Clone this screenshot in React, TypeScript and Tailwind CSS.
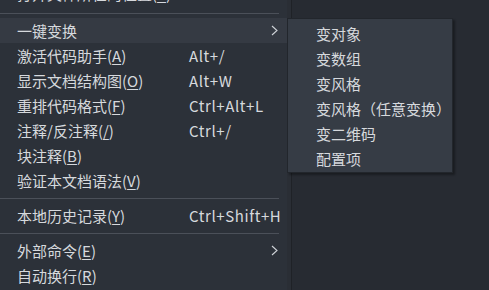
import React from "react";

type Item =
  | { sep: true }
  | { sep?: false; label: string; key?: string; shortcut?: string; arrow?: boolean; active?: boolean; first?: boolean };

const items: Item[] = [
  { label: "打开文件所在的位置", key: "E", first: true },
  { sep: true },
  { label: "一键变换", arrow: true, active: true },
  { label: "激活代码助手", key: "A", shortcut: "Alt+/" },
  { label: "显示文档结构图", key: "O", shortcut: "Alt+W" },
  { label: "重排代码格式", key: "F", shortcut: "Ctrl+Alt+L" },
  { label: "注释/反注释", key: "/", shortcut: "Ctrl+/" },
  { label: "块注释", key: "B" },
  { label: "验证本文档语法", key: "V" },
  { sep: true },
  { label: "本地历史记录", key: "Y", shortcut: "Ctrl+Shift+H" },
  { sep: true },
  { label: "外部命令", key: "E", arrow: true },
  { label: "自动换行", key: "R" },
];

const sub = ["变对象", "变数组", "变风格", "变风格（任意变换）", "变二维码", "配置项"];

const font = { fontFamily: '"Segoe UI", "Noto Sans CJK SC", "Noto Sans", sans-serif' };

function Chevron() {
  return (
    <svg width="7" height="11" viewBox="0 0 7 11" fill="none">
      <path d="M1 1 L6 5.5 L1 10" stroke="#cfd3d8" strokeWidth="1.1" />
    </svg>
  );
}

export default function App() {
  return (
    <div
      className="relative w-[489px] h-[290px] overflow-hidden bg-[#272b32] text-[15px] text-[#d6d9dd] flex"
      style={font}
    >
      <div className="w-[287px] shrink-0 h-full bg-[#2c3139] overflow-hidden">
        <div className="-mt-[17px] flex flex-col">
          {items.map((it, i) =>
            it.sep ? (
              <div key={i} className="h-[10px] flex items-center">
                <div className="h-px w-[279px] bg-[#4b5059]" />
              </div>
            ) : (
              <div
                key={i}
                className={`h-[25px] flex items-center pl-[17px] pr-[9px] whitespace-nowrap ${
                  it.active ? "bg-[#353a43]" : ""
                } ${it.first ? "pb-[5px]" : ""}`}
              >
                <div className="w-[172px] shrink-0 leading-none">
                  {it.label}
                  {it.key && (
                    <>
                      (<span className="underline underline-offset-2">{it.key}</span>)
                    </>
                  )}
                </div>
                <div className="flex-1 min-w-0 leading-none tracking-[0.6px]">{it.shortcut}</div>
                {it.arrow && <Chevron />}
              </div>
            )
          )}
        </div>
      </div>
      <div className="w-[4px] shrink-0 h-full bg-[#2a2e35]" />
      <div className="w-px shrink-0 h-full bg-[#1f2227]" />
      <div className="absolute left-[287px] top-[18px] w-[166px] h-[155px] bg-[#363c45] border border-[#22262c] shadow-[2px_2px_2px_rgba(0,0,0,0.35)] py-[2px]">
        {sub.map((s) => (
          <div key={s} className="h-[25px] flex items-center pl-[28px] leading-none whitespace-nowrap">
            {s}
          </div>
        ))}
      </div>
    </div>
  );
}
